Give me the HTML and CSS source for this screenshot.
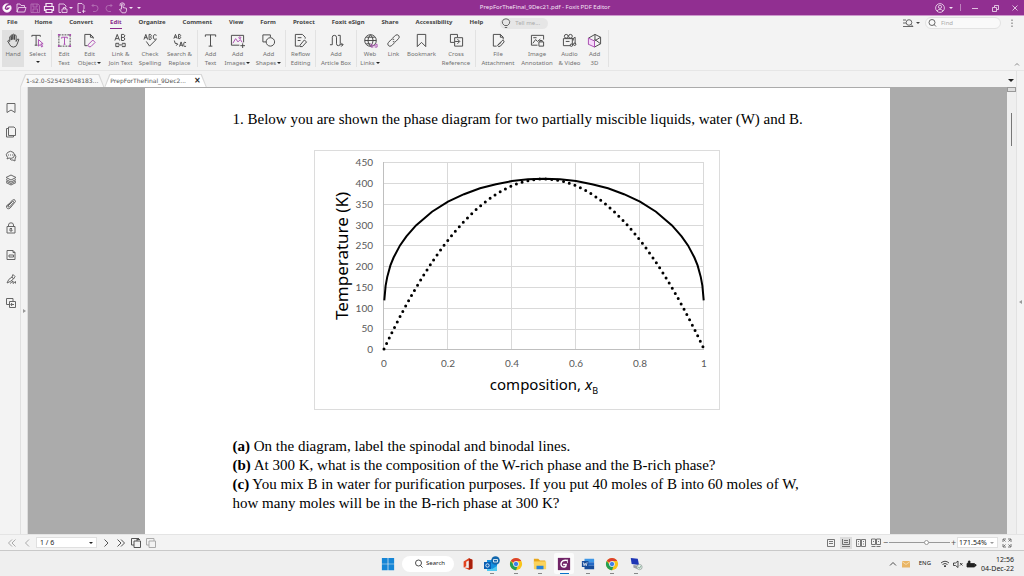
FILE: index.html
```html
<!DOCTYPE html>
<html lang="en">
<head>
<meta charset="utf-8">
<title>PrepForTheFinal_9Dec21.pdf - Foxit PDF Editor</title>
<link rel="stylesheet" href="styles.css">
</head>
<body>
<header class="titlebar">
  <div class="quick">
    <button aria-label="Foxit"><svg viewBox="0 0 12 12"><circle cx="6" cy="6" r="4.2" fill="#fff"/><path d="M9.500 2.500Q5 2.500 4.300 6.300Q6 8.500 7.800 6.200H5.800" stroke="#912f91" stroke-width="1.300"/></svg></button>
    <button aria-label="Open"><svg viewBox="0 0 12 12"><path d="M2 10V2H5L6 3.500H9.500V5M2 10L3.500 5.500H11L9.700 10Z"/></svg></button>
    <button class="dim" aria-label="Save"><svg viewBox="0 0 12 12"><path d="M2 2H9L10.500 3.500V10.500H2ZM4 2V5H8V2M4 10V7H8.500V10"/></svg></button>
    <button aria-label="Print"><svg viewBox="0 0 12 12"><path d="M3 4V1.500H9V4M3 8.500H1.500V4.500H10.500V8.500H9M3 7.500H9V10.500H3Z" stroke-width="1.200"/></svg></button>
    <button aria-label="Export"><svg viewBox="0 0 12 12"><path d="M2 10.500V2H7L9 4V5M2 10.500H4M5 10.500V7H10V10.500ZM6.500 7V5.500H8.500V7"/></svg></button>
    <i class="caret"></i>
    <button aria-label="New"><svg viewBox="0 0 12 12"><path d="M6 10.500H3V1.500H7L9 3.500V7M8.500 7.500V11M7 9.200H10.500"/></svg></button>
    <button class="dim" aria-label="Undo"><svg viewBox="0 0 12 12"><path d="M4.500 2L3 3.500L4.500 5M3 3.500H6.500Q9 3.500 9 6.200T6.500 9.500H4"/></svg></button>
    <button class="dim" aria-label="Redo"><svg viewBox="0 0 12 12"><path d="M7.500 2L9 3.500L7.500 5M9 3.500H5.500Q3 3.500 3 6.200T5.500 9.500H8"/></svg></button>
    <button aria-label="Touch mode"><svg viewBox="0 0 12 12"><path d="M4.500 7V2.500Q5.200 1.500 6 2.500V5.500L9.500 6.300Q10 9 8.500 10.800H5L2.500 7.500Q3.200 6.500 4.500 7.800M3 4Q2.500 .8 5.200 .8T7.500 3.500"/></svg></button>
    <i class="caret"></i><i class="caret more"></i>
  </div>
  <div class="doc-title">PrepForTheFinal_9Dec21.pdf - Foxit PDF Editor</div>
  <div class="window-tools">
    <button aria-label="Account"><svg viewBox="0 0 12 12"><circle cx="6" cy="6" r="4.400"/><circle cx="6" cy="4.800" r="1.600"/><path d="M3 9Q6 5.500 9 9"/></svg></button>
    <i class="caret"></i><i class="bar"></i>
    <button aria-label="Minimize"><svg viewBox="0 0 12 12"><path d="M3 6.500H9"/></svg></button>
    <button aria-label="Restore"><svg viewBox="0 0 12 12"><path d="M3.500 5.500H7.500V9.500H3.500ZM5.500 5V3.500H9.500V7.500H8"/></svg></button>
    <button aria-label="Close"><svg viewBox="0 0 12 12"><path d="M3.500 3.500L8.500 8.500M8.500 3.500L3.500 8.500"/></svg></button>
  </div>
</header>

<nav class="menu">
  <button>File</button><button>Home</button><button>Convert</button><button class="current">Edit</button><button>Organize</button><button>Comment</button><button>View</button><button>Form</button><button>Protect</button><button>Foxit eSign</button><button>Share</button><button>Accessibility</button><button>Help</button>
  <label class="pill tell"><svg viewBox="0 0 12 12"><path d="M4.500 8.500Q1.800 6.500 2.300 4.500Q3 1.800 6 1.800T9.700 4.500Q10.200 6.500 7.500 8.500ZM4.800 10.500H7.200"/></svg><input aria-label="Tell me" placeholder="Tell me..."></label>
  <div class="find-tools">
    <button aria-label="Search options"><svg viewBox="0 0 12 12"><circle cx="7" cy="5.500" r="2.800"/><path d="M1 3H4M1 6H4M1 9.500H11M9 7.500L11 9.500"/></svg></button>
    <i class="caret"></i>
    <label class="pill find"><svg viewBox="0 0 12 12"><circle cx="6" cy="5.500" r="3"/><path d="M8 7.500L10 9.500"/></svg><input aria-label="Find" placeholder="Find"></label>
    <button aria-label="More"><svg viewBox="0 0 12 12"><path d="M6 2.500V4M6 5.500V7M6 8.500V10"/></svg></button>
  </div>
</nav>

<section class="ribbon" aria-label="Edit">
  <div class="group g-hand">
    <button class="tool active"><svg viewBox="0 0 16 16"><path d="M4 9V4Q4.800 3 5.600 4V7.500V2.300Q6.500 1.300 7.300 2.300V7V1.700Q8.200 .8 9 1.700V7V2.700Q10 1.800 10.800 2.700V9L12.300 6.500Q13.800 6 13.600 7.300L11.800 12Q11 15 8 15Q5 15 4 12.500L1.800 8.500Q2.200 7 4 9Z"/></svg>Hand</button>
    <button class="tool"><svg viewBox="0 0 16 16"><path d="M2 4V2.500H11V4M6.500 2.500V13M5 13H8"/><path class="acc" d="M9 7V14L11 12.200L12.500 15L13.500 14.300L12 11.500H14Z"/></svg>Select<i class="caret"></i></button>
  </div>
  <div class="group g-edit">
    <button class="tool"><svg viewBox="0 0 16 16"><path d="M2 2H14V14H2Z" stroke-dasharray="2 1"/><path class="acc" d="M5 6V4.500H11V6M8 4.500V12M7 12H9"/><path class="acc fill" d="M1 1H3V3H1ZM13 1H15V3H13ZM1 13H3V15H1ZM13 13H15V15H13Z"/></svg>Edit<br>Text</button>
    <button class="tool"><svg viewBox="0 0 16 16"><path d="M6 13.500H3V1.500H9L12 4.500V6M9 1.500V4.500H12"/><path class="acc" d="M7 12L11.500 7.500L14 10L9.500 14.500Q7 15.500 6.500 13.500Z"/></svg>Edit<br>Object<i class="caret"></i></button>
    <button class="tool"><svg viewBox="0 0 16 16"><path d="M2 8L4.500 1.500L7 8M3 6H6M9 1.500V8H11.500Q14 6.500 11.500 4.700Q14 3 11.500 1.500ZM9 4.700H11.500M6.500 11H3V14.500H6.500M9.500 11H13V14.500H9.500M5 12.700H11"/></svg>Link &amp;<br>Join Text</button>
    <button class="tool"><svg viewBox="0 0 16 16"><path d="M1 7L3 1.500L5 7M1.700 5H4.300M6.500 1.500V7H8Q10 5.500 8 4.200Q10 3 8 1.500ZM14.500 2.500Q11 .5 11 4.200T14.500 6.200M3.500 9L7 14L14 7"/></svg>Check<br>Spelling</button>
    <button class="tool"><svg viewBox="0 0 16 16"><path d="M2 6L3.700 1.500L5.500 6M2.700 4.500H4.800M7 1.500V6H8.500Q10 4.500 8.500 3.700Q10 2.500 8.500 1.500ZM8 14.500L9.700 9.500L11.500 14.500M8.500 13H11M15 10.500Q12.500 8.500 12.500 12T15 14M2.500 8Q2.500 12 6 12M4.500 10.500L6 12L4.500 13.500"/></svg>Search &amp;<br>Replace</button>
  </div>
  <div class="group g-add">
    <button class="tool"><svg viewBox="0 0 16 16"><path d="M2.500 4V2H13.500V4M8 2V14M6 14H10"/></svg>Add<br>Text</button>
    <button class="tool"><svg viewBox="0 0 16 16"><path d="M1.500 2.500H14.500V10M1.500 2.500V13H10M11 13.500H16M13.500 11V16"/><path class="acc" d="M3 11L6 6L8.500 9.500L11 7L13 10"/><circle class="acc" cx="10.500" cy="5" r="1"/></svg>Add<br>Images<i class="caret"></i></button>
    <button class="tool"><svg viewBox="0 0 16 16"><path d="M5.500 9.500H2V2H10V4.500"/><circle cx="10" cy="9.500" r="4.500"/></svg>Add<br>Shapes<i class="caret"></i></button>
  </div>
  <div class="group g-reflow">
    <button class="tool"><svg viewBox="0 0 16 16"><path d="M7 14H2.500V1.500H10L13 4.500V6M5 5H9M5 8H8M7.500 13L12 7.500L14.500 9.500L10 14.500H7.500Z"/></svg>Reflow<br>Editing</button>
  </div>
  <div class="group g-article">
    <button class="tool"><svg viewBox="0 0 16 16"><path d="M1 12.500H3.500V4.500Q3.500 2.500 5.700 2.500T8 4.500V11.500Q8 13.500 10 13.500T12 11.500V2.500H9.500M12 12.500H15M13 10.500L15 12.500L13 14.500"/></svg>Add<br>Article Box</button>
  </div>
  <div class="group g-link">
    <button class="tool"><svg viewBox="0 0 16 16"><circle cx="8" cy="8" r="6.200"/><path d="M1.800 8H14.200M3.500 4.500H12.500M8 1.800Q2.500 8 8 14.200M8 1.800Q13.500 8 8 14.200M3.500 11.500H8"/><path class="acc" d="M10 12H8.500V15H11M13 12H15V15H12.500M10 13.500H13.500"/></svg>Web<br>Links<i class="caret"></i></button>
    <button class="tool"><svg viewBox="0 0 16 16"><path d="M7 5.500L10 2.500Q12 1 13.500 2.700T13.300 6L10.500 9Q9 10.500 7.300 9M9 10.500L6 13.500Q4 15 2.500 13.300T2.700 10L5.500 7Q7 5.500 8.700 7"/></svg>Link</button>
    <button class="tool"><svg viewBox="0 0 16 16"><path d="M3.500 1.500H12.500V14.500L8 10L3.500 14.500Z"/></svg>Bookmark</button>
    <button class="tool"><svg viewBox="0 0 16 16"><path d="M5.500 10H1.500V1.500H9V4.500M6 5H14.500V14H6ZM6.500 9H11M9 6.500L11.500 9L9 11.500"/></svg>Cross<br>Reference</button>
  </div>
  <div class="group g-attach">
    <button class="tool"><svg viewBox="0 0 16 16"><path d="M6 14H2.500V1.500H10L13 4.500V7M10 1.500V4.500H13M8 12L12 8Q14 7.500 14 9.500L10 14Q7.500 15.500 7 13L11 10"/></svg>File<br>Attachment</button>
    <button class="tool"><svg viewBox="0 0 16 16"><path d="M8 13H1.500V2.500H14.500V7M3 11L6 7L8 9L11 6.500M3.500 5H7M9.500 9.500H14.500V14H9.500ZM10.500 9.500V8H13V9.500"/></svg>Image<br>Annotation</button>
    <button class="tool"><svg viewBox="0 0 16 16"><circle cx="4.500" cy="3.500" r="2"/><circle cx="9" cy="3.500" r="2"/><path d="M9 13.500H1.500V6H12V8M11 13V6.500L14 4.500V12M4 9H8"/><circle cx="10" cy="13" r="1.300"/><circle cx="13.500" cy="12" r="1.300"/></svg>Audio<br>&amp; Video</button>
    <button class="tool"><svg viewBox="0 0 16 16"><path d="M1.500 5.500L8.500 1.500L14.500 4.500V11.500L8 15M8 8.500L14.500 4.500M8.500 1.500V7L1.500 12M8.500 7L14.500 11.500"/><path class="acc tint" d="M1.500 5.500L8 8.500V15L1.500 12Z"/></svg>Add<br>3D</button>
  </div>
  <button class="collapse" aria-label="Collapse ribbon"><svg viewBox="0 0 12 12"><path d="M4 7.500L6 5.500L8 7.500"/></svg></button>
</section>

<div class="tabstrip">
  <button class="tab">1-s2.0-S25425048183...</button>
  <button class="tab open">PrepForTheFinal_9Dec2...<b>×</b></button>
  <button class="tab-list" aria-label="All tabs"><i class="caret big"></i></button>
</div>

<main class="work">
  <aside class="panel">
    <button aria-label="Bookmarks"><svg viewBox="0 0 12 12"><path d="M2 1.500H10V10.500L6 8L2 10.500Z"/></svg></button>
    <button aria-label="Pages"><svg viewBox="0 0 12 12"><path d="M3.500 1H9L10.500 2.500V9.500H3.500ZM3.500 2.500H1.500V11H8.500V9.500"/></svg></button>
    <button aria-label="Comments"><svg viewBox="0 0 12 12"><path d="M2.500 7.500Q0 4.500 2.500 2.500Q5.500 0 8.500 2.500Q10.500 5 8.500 7.500Q6 9 4 8L2 9ZM9.500 4Q12 7 10 9V11L8 10Q6 10.500 5 9M3 5H4M5 5H6M7 5H8"/></svg></button>
    <button aria-label="Layers"><svg viewBox="0 0 12 12"><path d="M1 3.500L6 1L11 3.500L6 6ZM1 5.500L6 8L11 5.500M1 7L6 9.500L11 7M1 8.500L6 11L11 8.500"/></svg></button>
    <button aria-label="Attachments"><svg viewBox="0 0 12 12"><path d="M3 8L7.500 3.500Q9 3 8.700 4.500L4.500 9Q2.500 9.500 2.700 7.500L7.500 2Q10 .5 10.500 3.500L5 10.200Q1.500 12 1.500 8L4 5.500"/></svg></button>
    <button aria-label="Security"><svg viewBox="0 0 12 12"><path d="M2 4.500H10V11H2ZM3.500 4.500V3Q3.500 .8 6 .8T8.500 3V4.500M7 6.500H5V9H7V7.800H6"/></svg></button>
    <button class="apart" aria-label="Fields"><svg viewBox="0 0 12 12"><path d="M2 1.500H8L10 3.500V10.500H2ZM8 1.500V3.500H10M4 6H8.500V8H4Z"/></svg></button>
    <button aria-label="Signatures"><svg viewBox="0 0 12 12"><path d="M2 10Q3 6 7 4L8.500 6Q6 8.500 2 10ZM7 4L8 1.500L10 3.500L8.500 6M5 10.500L8 8L8 10.500L10.500 8.500V10.500"/></svg></button>
    <button aria-label="Links"><svg viewBox="0 0 12 12"><path d="M4 7.500H1.500V1.500H8V4M4.500 4.500H10.500V10.500H4.500ZM6 7.500H9M7 6L5.800 7.500L7 9"/></svg></button>
  </aside>
  <button class="splitter" aria-label="Expand panel"><i></i></button>
  <div class="canvas">
    <article class="page">
      <p class="question">1. Below you are shown the phase diagram for two partially miscible liquids, water (W) and B.</p>
      <svg class="chart" viewBox="0 0 406 260" role="img" aria-label="Phase diagram">
        <rect class="frame" x="0.500" y="0.500" width="405" height="259"/>
        <path class="grid" d="M70 12.500H390M70 33.500H390M70 54.500H390M70 75.500H390M70 95.500H390M70 116.500H390M70 137.500H390M70 158.500H390M70 179.500H390M133.500 12V200M197.500 12V200M261.500 12V200M325.500 12V200M389.500 12V200"/>
        <path class="axis" d="M69.500 12V199.500H390"/>
        <path class="binodal" d="M70.300 150.400L71.600 135.800L73.200 127.100L76.400 115.400L79.600 107.500L86 95.400L92.400 86.300L102 75.400L118 61.700L134 51.700L150 44.200L166 38.300L182 34.200L198 31.100L214 29.300L230 28.800L246 29.300L262 31.100L278 34.200L294 38.300L310 44.200L326 51.700L342 61.700L358 75.400L367.600 86.300L374 95.400L380.400 107.500L383.600 115.400L386.800 127.100L388.400 135.800L389.700 150.400"/>
        <path class="spinodal" d="M70 199Q230 -141 390 199"/>
        <g class="ticks end"><text x="59" y="16">450</text><text x="59" y="37">400</text><text x="59" y="58">350</text><text x="59" y="79">300</text><text x="59" y="99">250</text><text x="59" y="120">200</text><text x="59" y="141">150</text><text x="59" y="162">100</text><text x="59" y="182">50</text><text x="59" y="203">0</text></g>
        <g class="ticks mid"><text x="70" y="217">0</text><text x="134" y="217">0.2</text><text x="198" y="217">0.4</text><text x="262" y="217">0.6</text><text x="326" y="217">0.8</text><text x="390" y="217">1</text></g>
        <text class="label" transform="translate(34 106) rotate(-90)">Temperature (K)</text>
        <text class="label small" x="230" y="240">composition, <tspan font-style="italic">x</tspan><tspan class="sub" dy="4">B</tspan></text>
      </svg>
      <p><b>(a)</b> On the diagram, label the spinodal and binodal lines.</p>
      <p><b>(b)</b> At 300 K, what is the composition of the W-rich phase and the B-rich phase?</p>
      <p><b>(c)</b> You mix B in water for purification purposes. If you put 40 moles of B into 60 moles of W, how many moles will be in the B-rich phase at 300 K?</p>
    </article>
  </div>
  <div class="scroll"><span class="split-box"></span><span class="thumb"></span></div>
  <button class="splitter right" aria-label="Expand right panel"><i></i></button>
</main>

<footer class="status">
  <div class="pager">
    <button class="off" aria-label="First page"><svg viewBox="0 0 12 12"><path d="M6 2.500L2.500 6L6 9.500M9.500 2.500L6 6L9.500 9.500"/></svg></button>
    <button class="off" aria-label="Previous page"><svg viewBox="0 0 12 12"><path d="M8 2.500L4.500 6L8 9.500"/></svg></button>
    <span class="combo page-no"><select aria-label="Page"><option>1 / 6</option></select><i class="caret"></i></span>
    <button aria-label="Next page"><svg viewBox="0 0 12 12"><path d="M4.500 2.500L8 6L4.500 9.500"/></svg></button>
    <button aria-label="Last page"><svg viewBox="0 0 12 12"><path d="M2.500 2.500L6 6L2.500 9.500M6 2.500L9.500 6L6 9.500"/></svg></button>
    <button aria-label="Previous view"><svg viewBox="0 0 12 12"><path d="M4 8H1.500V1.500H9M4 4H10.500V10.500H4ZM7 1V4M7 2.500H10"/></svg></button>
    <button class="off" aria-label="Next view"><svg viewBox="0 0 12 12"><path d="M4 8H1.500V1.500H9V4M4 4H10.500V10.500H4Z"/></svg></button>
  </div>
  <div class="zoom">
    <button aria-label="Single page"><svg viewBox="0 0 12 12"><path d="M2.500 2.500H9.500V9.500H2.500ZM4 4.500H8M4 6.500H8"/></svg></button>
    <button class="on" aria-label="Continuous"><svg viewBox="0 0 12 12"><path d="M2.500 2V7.500H9.500V2M2 9.500H10M4 3.500H8M4 5.500H8"/></svg></button>
    <button aria-label="Facing"><svg viewBox="0 0 12 12"><path d="M1.500 2.500H5.500V9.500H1.500ZM6.500 2.500H10.500V9.500H6.500ZM3 4.500H4M3 7H4M8 4.500H9M8 7H9"/></svg></button>
    <button aria-label="Continuous facing"><svg viewBox="0 0 12 12"><path d="M1.500 2V7.500H5.500V2ZM6.500 2V7.500H10.500V2ZM1.500 9.500H5.500M6.500 9.500H10.500M3 4.500H4M8 4.500H9"/></svg></button>
    <button class="step" aria-label="Zoom out">−</button>
    <input type="range" min="0" max="100" value="62" aria-label="Zoom">
    <button class="step" aria-label="Zoom in">+</button>
    <span class="combo percent"><select aria-label="Zoom level"><option>171.54%</option></select><i class="caret"></i></span>
    <button aria-label="Full screen"><svg viewBox="0 0 12 12"><path d="M2 5V2H5M7 2H10V5M10 7V10H7M5 10H2V7M4.500 4.500L2.500 2.500M7.500 4.500L9.500 2.500M7.500 7.500L9.500 9.500M4.500 7.500L2.500 9.500"/></svg></button>
  </div>
</footer>

<div class="taskbar">
  <span></span>
  <div class="apps">
    <button aria-label="Start"><svg viewBox="0 0 16 16"><path fill="#1686d6" d="M1 1H7.600V7.600H1ZM8.400 1H15V7.600H8.400ZM1 8.400H7.600V15H1ZM8.400 8.400H15V15H8.400Z"/></svg></button>
    <label class="pill search"><svg viewBox="0 0 12 12"><circle cx="5.500" cy="5" r="3"/><path d="M7.500 7.500L9.500 9.500"/></svg><input aria-label="Search" placeholder="Search"></label>
    <button aria-label="Office"><svg viewBox="0 0 16 16"><path fill="#e2431e" d="M3 5L9 1.500L13 3V13L9 14.500L3 12L9 12.500V4L6 5.500V10.500L3 12Z"/><path fill="#a8200d" d="M9 1.500L13 3V13L9 14.500Z"/></svg></button>
    <button class="run" aria-label="Outlook"><svg class="large" viewBox="0 0 16 16"><path fill="#1490df" d="M3 4H13V15H3Z"/><path fill="#50c8f0" d="M3 10L8 13L13 10V15H3Z"/><path fill="#0a5fb4" d="M0 6H7V13H0Z"/><circle cx="3.500" cy="9.500" r="1.700" stroke="#fff"/><circle cx="11.500" cy="4.500" r="4.300" fill="#1267ad"/><path stroke="#fff" d="M9.500 3.500H13.500V6H9.500Z"/></svg></button>
    <button class="run" aria-label="Chrome"><svg viewBox="0 0 16 16"><circle cx="8" cy="8" r="7" fill="#f9c51b"/><path fill="#dc4031" d="M8 8L2 4.500A7 7 0 0 1 14 4.500H8Z"/><path fill="#239e55" d="M8 15A7 7 0 0 1 2 4.500L5.500 9.500L9.500 11.200Z"/><circle cx="8" cy="8" r="3" fill="#3e80e8" stroke="#fff"/></svg></button>
    <button class="run" aria-label="File Explorer"><svg viewBox="0 0 16 16"><path fill="#e7a61a" d="M1 2H6L8 4H14V8H1Z"/><path fill="#fbd35b" d="M1 5H15V14H1Z"/><path fill="#2782d8" d="M4 10H12V14H4Z"/></svg></button>
    <button class="run here" aria-label="Foxit PDF Editor"><svg viewBox="0 0 16 16"><path fill="#702467" d="M1 1H15V15H1Z"/><path stroke="#fff" stroke-width="1.700" d="M12 4Q5 3 4.500 8Q5 12 8.500 11.500Q10.500 11 10.500 8.500H7"/><path stroke="#fff" d="M12 3V7"/></svg></button>
    <button class="run" aria-label="Word"><svg viewBox="0 0 16 16"><path fill="#3d96e6" d="M4 2H15V6H4Z"/><path fill="#2368c4" d="M4 6H15V10H4Z"/><path fill="#174c9a" d="M4 10H15V14H4ZM1 4.500H8.500V11.500H1Z"/><path stroke="#fff" d="M2.500 6L3.500 10L4.700 7L6 10L7 6"/></svg></button>
    <button class="run" aria-label="Chrome profile"><svg viewBox="0 0 16 16"><circle cx="8" cy="8" r="7" fill="#f9c51b"/><path fill="#dc4031" d="M8 8L2 4.500A7 7 0 0 1 14 4.500H8Z"/><path fill="#239e55" d="M8 15A7 7 0 0 1 2 4.500L5.500 9.500L9.500 11.200Z"/><circle cx="8" cy="8" r="3" fill="#3e80e8" stroke="#fff"/></svg></button>
    <button class="run" aria-label="Remote desktop"><svg viewBox="0 0 16 16"><path fill="#1d35b5" d="M2 1L10 2L11.500 9L3 8Z"/><path fill="#9a9ea6" d="M5 9L11 10L10 14L5 12Z"/><circle cx="12" cy="11.500" r="3" fill="#e6eeea" stroke="#8b9b95"/><path stroke="#4f8b68" d="M10.500 11.500L12 12.800L13.500 10.500"/></svg></button>
  </div>
  <div class="tray">
    <button aria-label="Hidden icons"><svg viewBox="0 0 12 12"><path d="M3 7.500L6 4.500L9 7.500"/></svg></button>
    <button aria-label="Mail"><svg viewBox="0 0 12 12"><path fill="#e9b566" stroke="none" d="M2 3H10V9.500H2Z"/><path stroke="#fae5bd" d="M2 3.500L6 6.500L10 3.500"/></svg></button>
    <span class="lang">ENG</span>
    <button aria-label="Wi-Fi"><svg viewBox="0 0 12 12"><path d="M2 5Q6 1.500 10 5M3.500 6.500Q6 4.300 8.500 6.500M5 8Q6 7 7 8L6 9Z"/></svg></button>
    <button aria-label="Muted"><svg viewBox="0 0 12 12"><path d="M1.500 5V7.500H3.500L6 9.500V3L3.500 5ZM8 5L10.500 7.500M10.500 5L8 7.500"/></svg></button>
    <button aria-label="Battery"><svg viewBox="0 0 12 12"><path fill="#222" d="M2 5.500H9.500V9H2ZM10 6.500H11V8H10ZM3 5.500L3.500 3H5V5.500"/></svg></button>
    <div class="clock">12:56<br>04-Dec-22</div>
  </div>
</div>
</body>
</html>
```
FILE: styles.css
```css
* { box-sizing: border-box; }

body {
  margin: 0;
  height: 100vh;
  display: flex;
  flex-direction: column;
  overflow: hidden;
  background: #f3f3f3;
  color: #555;
  font: 6px/9px "Noto Sans", "Open Sans", sans-serif;
}

button, input, select {
  margin: 0;
  padding: 0;
  border: 0;
  background: none;
  color: inherit;
  font: inherit;
}

svg {
  display: block;
  width: 12px;
  height: 12px;
  fill: none;
  stroke: currentColor;
  stroke-width: 0.8;
}

.caret {
  display: inline-block;
  flex: none;
  border: 2px solid transparent;
  border-top-color: currentColor;
  border-bottom: 0;
}

.pill {
  display: flex;
  align-items: center;
  border-radius: 8px;
}

.pill input { width: 100%; min-width: 0; outline: 0; }
.pill svg { flex: none; }

/* Title bar */
.titlebar {
  flex: none;
  display: grid;
  grid-template-columns: 1fr auto 1fr;
  align-items: center;
  height: 16px;
  background: #912f91;
  border-bottom: 1px solid #cc99cc;
  color: #f4e4f4;
}

.quick, .window-tools { display: flex; align-items: center; }
.quick { gap: 2px; padding-left: 1px; }
.quick .dim { opacity: 0.4; }
.quick .caret { margin-left: -2px; }
.quick .more { margin-left: 2px; }
.window-tools { justify-content: flex-end; gap: 7px; padding-right: 3px; }
.window-tools svg { margin-left: 1px; }
.window-tools .caret { margin-left: -4px; }
.window-tools .bar { width: 1px; height: 7px; background: #bd82bd; }
.doc-title { padding-left: 66px; }

/* Menu */
.menu {
  flex: none;
  display: flex;
  align-items: center;
  gap: 17px;
  height: 14px;
  padding-left: 7px;
  color: #444;
}

.menu > button { font-weight: 700; height: 12px; border-bottom: 1px solid transparent; }
.menu > .current { color: #8b2a8b; border-color: #8b2a8b; }
.tell { width: 48px; height: 11px; gap: 3px; background: #e6e6e6; }
.pill input::placeholder { color: #aaa; opacity: 1; }
.find-tools { margin-left: auto; display: flex; align-items: center; gap: 5px; padding-right: 6px; }
.find-tools .caret { margin-left: -3px; }
.find { width: 76px; height: 12px; gap: 3px; border: 1px solid #e2e2e2; background: #f9f9f9; }

/* Ribbon */
.ribbon {
  flex: none;
  display: flex;
  height: 41px;
  padding-left: 2px;
  border-bottom: 1px solid #e6e6e6;
  color: #707070;
}

.group { display: grid; height: 37px; border-right: 1px solid #e2e2e2; }
.g-hand { grid-template-columns: 22px 27px; }
.g-edit { grid-template-columns: 24px 27px 35px 24px 35px; }
.g-add { grid-template-columns: 25px 29px 33px; }
.g-reflow { grid-template-columns: 29px; }
.g-article { grid-template-columns: 40px; }
.g-link { grid-template-columns: 26px 21px 35px 34px; padding-right: 2px; }
.g-attach { grid-template-columns: 40px 38px 27px 23px; padding: 0 2px; }

.tool { align-self: start; padding-top: 3px; text-align: center; white-space: nowrap; }
.tool svg { width: 15px; height: 15px; margin: 0 auto 2px; color: #444; stroke-width: 1; }
.tool .caret { margin-left: 1px; color: #222; vertical-align: 1px; }
.g-hand .caret { display: block; width: 4px; margin: 2px auto 0; }
.tool.active { padding-bottom: 8px; background: #e0e0e0; }
.tool .acc { stroke: #a94ab0; }
.tool .fill { fill: #a94ab0; stroke: none; }
.tool .tint { fill: #f6d8fa; }
.collapse { margin-left: auto; align-self: flex-end; padding-right: 1px; }

/* Document tabs */
.tabstrip {
  flex: none;
  display: flex;
  align-items: flex-end;
  height: 16px;
  margin-right: 7px;
  padding-left: 20px;
  border-right: 1px solid #e2e2e2;
  font-family: "DejaVu Sans", sans-serif;
}

.tab {
  position: relative;
  isolation: isolate;
  height: 13px;
  padding: 0 6px;
  background: #d8d8d8;
  clip-path: polygon(5px 0, calc(100% - 5px) 0, 100% 100%, 0 100%);
  white-space: nowrap;
}

.tab::before {
  content: "";
  position: absolute;
  inset: 1px 1px 0;
  z-index: -1;
  background: #f8f8f8;
  clip-path: polygon(5px 0, calc(100% - 5px) 0, 100% 100%, 0 100%);
}

.tab.open::before { background: #fff; }
.tab b { margin-left: 8px; color: #222; font-size: 8px; line-height: 8px; }
.tab-list { margin-left: auto; align-self: center; padding-right: 2px; color: #222; }
.caret.big { border-width: 3px 3px 0; }

/* Work area */
.work { flex: 1; min-height: 0; display: flex; }
.panel { flex: none; width: 21px; display: flex; flex-direction: column; gap: 12px; padding: 15px 0 0 5px; border-right: 1px solid #e0e0e0; }
.panel svg { color: #666; stroke-width: 1; }
.panel button { width: 12px; height: 12px; }
.panel .apart { margin-top: 3px; }
.splitter { flex: none; width: 7px; display: grid; place-items: center; border-right: 1px solid #ddd; }
.splitter i { border: 2px solid transparent; border-left: 3px solid #999; border-right: 0; }
.splitter.right { width: 8px; border: 0; border-left: 1px solid #e2e2e2; padding-bottom: 18px; }
.splitter.right i { border-left: 0; border-right: 3px solid #999; }
.canvas { flex: 1; min-width: 0; background: #ababab; overflow: hidden; border-top: 1px solid #ababab; }

.page {
  width: 76%;
  min-height: 100%;
  margin: 0 auto;
  padding: 22px 80px 0 87px;
  background: #fff;
  color: #000;
  font: 15px/19px "Liberation Serif", serif;
}

.page p { margin: 0; }
.chart { width: 406px; height: auto; max-width: 100%; margin: 21px 0 27px 82px; stroke: none; }
.frame { stroke: #dcdcdc; stroke-width: 1; }
.grid { stroke: #d9d9d9; stroke-width: 1; }
.axis { stroke: #bfbfbf; stroke-width: 1; }
.binodal { stroke: #000; stroke-width: 2; }
.spinodal { stroke: #000; stroke-width: 3; stroke-linecap: round; stroke-dasharray: 0 6; }
.ticks { fill: #595959; font: 10px Lato, sans-serif; }
.end { text-anchor: end; }
.mid { text-anchor: middle; }
.label { fill: #000; font: 17px "Noto Sans", sans-serif; text-anchor: middle; }
.label.small { font-size: 15px; }
.sub { font-size: 9px; }

.scroll { flex: none; width: 9px; display: flex; flex-direction: column; align-items: center; background: #efefef; }
.split-box { width: 9px; height: 5px; border: 1px solid #999; background: #ddd; }
.thumb { width: 1px; height: 33px; margin-top: 21px; background: #777; }

/* Status bar */
.status {
  flex: none;
  display: flex;
  justify-content: space-between;
  height: 17px;
  border-bottom: 1px solid #c9c9c9;
  border-top: 1px solid #e4e4e4;
  color: #555;
}

.pager, .zoom { display: flex; align-items: center; gap: 3px; }
.pager { padding-left: 6px; }
.pager svg { stroke-width: 1; }
.off { color: #aaa; }
.combo { display: flex; align-items: center; height: 11px; padding: 0 3px; background: #fff; border: 1px solid #e0e0e0; color: #222; font-size: 7px; }
.combo select { flex: 1; min-width: 0; appearance: none; }
.page-no { width: 61px; }
.percent { width: 41px; padding-left: 1px; }
.percent .caret { color: #999; }
.zoom { padding-right: 11px; }
.on { background: #dcdcdc; }
.step { width: 5px; font-size: 9px; }
.zoom .step { margin: 0 -2px; }

.zoom input { width: 61px; height: 11px; appearance: none; }
.zoom input::-webkit-slider-runnable-track { height: 1px; background: #999; }
.zoom input::-webkit-slider-thumb { appearance: none; width: 5px; height: 5px; margin-top: -2px; border: 1px solid #999; border-radius: 50%; background: #fff; }

/* Taskbar */
.taskbar {
  flex: none;
  display: grid;
  grid-template-columns: 1fr auto 1fr;
  align-items: center;
  height: 25px;
  background: #efefef;
  color: #222;
}

.apps { display: flex; align-items: center; gap: 4px; }
.apps button { position: relative; width: 20px; height: 21px; display: grid; place-items: center; border-radius: 2px; }
.apps button svg { width: 14px; height: 14px; stroke: none; }
.apps button .large { width: 16px; height: 16px; }
.search { width: 52px; height: 16px; padding-left: 11px; gap: 1px; background: #fff; }
.apps .search input::placeholder { color: #222; }
.run::after { content: ""; position: absolute; bottom: 0; left: 8px; width: 4px; height: 1px; background: #888; }
.apps .here { background: #fbfbfb; }
.here::after { left: 6px; width: 9px; background: #0a73c9; }
.tray { display: flex; align-items: center; justify-content: flex-end; gap: 1px; padding-right: 10px; }
.lang { margin: 0 7px 0 6px; }
.clock { margin-left: 3px; text-align: right; font-size: 7px; }
```
